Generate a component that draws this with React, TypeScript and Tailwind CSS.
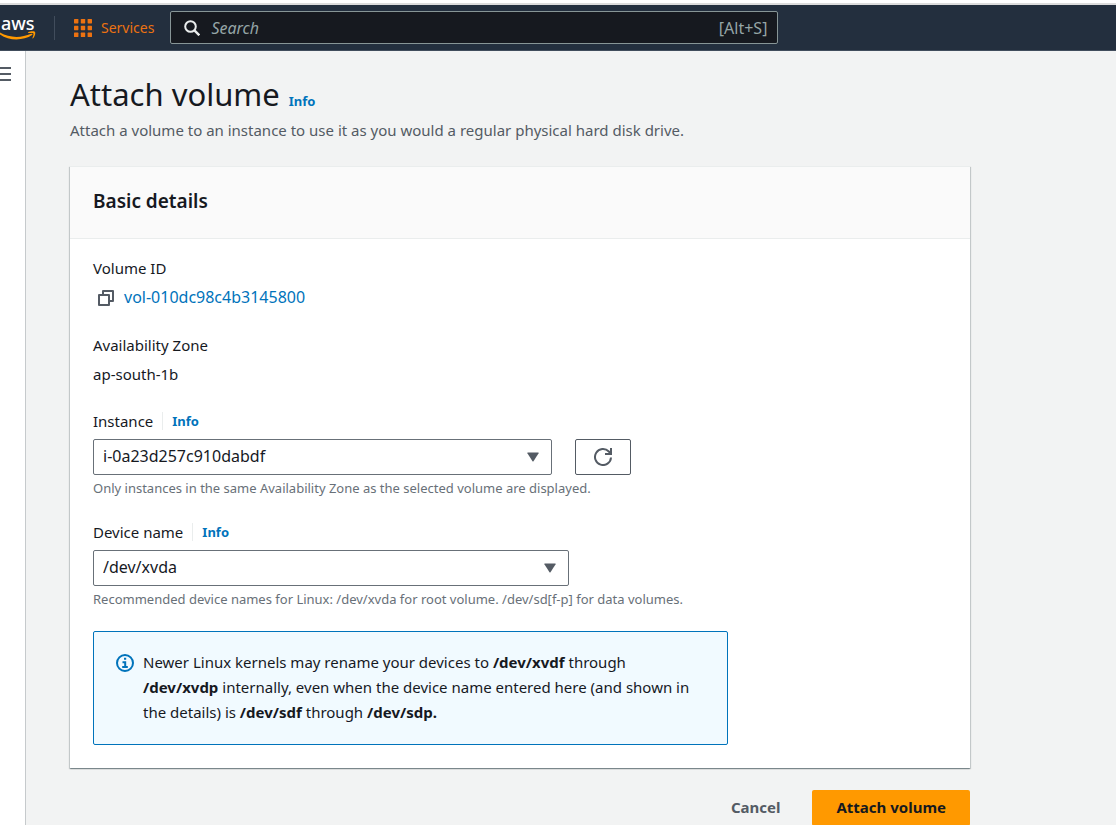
import React from 'react';

type IDetail = {
  title: string;
  children: React.ReactNode;
};

type ISelectField = {
  id: string;
  label: string;
  options: string[];
  hint: string;
  width: string;
  children?: React.ReactNode;
};

function AwsLogo() {
  return (
    <a
      href="#home"
      aria-label="AWS home"
      className="flex w-9 flex-col items-start"
    >
      <span className="pl-px text-lg leading-4 font-medium text-white">
        aws
      </span>
      <svg viewBox="0 0 36 9" className="h-[9px] w-9" fill="#f90">
        <path d="M0 1.6C9.5 7 21 7.2 31.2 2.8c1-.4 1.8.6.9 1.3C23 10 9 10 0 3.4z" />
        <path d="M28.2 1.3C30 .1 33.8-.1 34.8.7c1 .9.3 4.7-1.7 6.5-.5.4-.9.1-.6-.4.7-1.5 1.3-3.8.9-4.4-.5-.6-3-.6-4.7-.4-.6.1-.9-.3-.5-.7z" />
      </svg>
    </a>
  );
}

function ServicesIcon() {
  return (
    <svg viewBox="0 0 18 18" className="h-[18px] w-[18px]" fill="#ec7211">
      {[0, 6.8, 13.6].map((y) =>
        [0, 6.8, 13.6].map((x) => (
          <rect
            key={`${x}-${y}`}
            x={x}
            y={y}
            width="4.4"
            height="4.4"
            rx="0.6"
          />
        ))
      )}
    </svg>
  );
}

function TopBar() {
  return (
    <header className="flex h-[46px] items-center border-b border-[#414d5c] bg-[#232f3e]">
      <AwsLogo />
      <div className="ml-[18px] h-6 w-px bg-[#414d5c]" />
      <button
        type="button"
        className="ml-[19px] flex items-center gap-[9px] text-sm text-[#ec7211]"
      >
        <ServicesIcon />
        Services
      </button>
      <label className="ml-4 flex h-[33px] w-[608px] items-center rounded-xs border border-[#879596] bg-[#16191f] px-[10px]">
        <svg
          viewBox="0 0 16 16"
          className="mx-[3px] h-4 w-4 shrink-0"
          fill="none"
          stroke="#eaeded"
          strokeWidth="2"
        >
          <circle cx="6.5" cy="6.5" r="5.3" />
          <path d="M10.4 10.4l4.9 4.9" strokeWidth="2.4" />
        </svg>
        <input
          type="text"
          aria-label="Search"
          placeholder="Search"
          className="ml-2 min-w-0 flex-1 bg-transparent text-base text-white italic outline-none placeholder:text-[#95a5a6]"
        />
        <span className="text-base text-[#95a5a6]">[Alt+S]</span>
      </label>
    </header>
  );
}

function InfoLink() {
  return (
    <a href="#info" className="text-[13px] font-bold text-[#0073bb]">
      Info
    </a>
  );
}

function Detail({ title, children }: IDetail) {
  return (
    <div className="flex flex-col gap-[5px] leading-6">
      <div>{title}</div>
      <div>{children}</div>
    </div>
  );
}

function SelectField({
  id,
  label,
  options,
  hint,
  width,
  children,
}: ISelectField) {
  return (
    <div>
      <div className="flex items-center leading-6">
        <label htmlFor={id}>{label}</label>
        <div className="mx-[9px] h-[18px] w-px bg-[#eaeded]" />
        <InfoLink />
      </div>
      <div className="mt-[6px] flex gap-[23px]">
        <div className={`relative ${width}`}>
          <select
            id={id}
            className="h-9 w-full appearance-none rounded-xs border border-[#687078] bg-white px-[9px] pb-[2px] text-base"
          >
            {options.map((option) => (
              <option key={option}>{option}</option>
            ))}
          </select>
          <svg
            viewBox="0 0 12 10"
            className="pointer-events-none absolute top-[13px] right-[13px] h-[10px] w-3"
            fill="#545b64"
          >
            <path d="M.8.5h10.4q.8 0 .4.7L6.5 9.300q-.5.6-1 0L.4 1.2Q0 .5.8.5z" />
          </svg>
        </div>
        {children}
      </div>
      <p className="mt-1 text-[13px] leading-[18px] text-[#687078]">{hint}</p>
    </div>
  );
}

export default function App() {
  return (
    <div className="flex min-h-screen flex-col bg-white font-['Noto_Sans',sans-serif] text-[15px] text-[#16191f]">
      <div className="mt-[3px] h-[2px] bg-[#dcdcdc]" />
      <TopBar />
      <div className="flex flex-1">
        <aside className="w-[26px] shrink-0 border-r border-[#c6cacc] bg-white pt-4">
          <button type="button" aria-label="Open navigation" className="block">
            <svg
              viewBox="0 0 11 14"
              className="h-[14px] w-[11px]"
              stroke="#545b64"
              strokeWidth="2"
            >
              <path d="M0 1h11M0 7h11M0 13h11" />
            </svg>
          </button>
        </aside>
        <main className="min-w-0 flex-1 bg-[#f2f3f3] pl-11">
          <div className="max-w-[900px]">
            <div className="flex items-baseline gap-[9px] pt-[23px]">
              <h1 className="text-[31px] leading-10">Attach volume</h1>
              <InfoLink />
            </div>
            <p className="mt-1 leading-6 text-[#545b64]">
              Attach a volume to an instance to use it as you would a regular
              physical hard disk drive.
            </p>
            <section className="mt-6 border-t border-[#eaeded] bg-white shadow-[0_1px_1px_0_#001c244d,1px_1px_1px_0_#001c2426,-1px_1px_1px_0_#001c2426]">
              <div className="border-b border-[#eaeded] bg-[#fafafa] px-[23px] pt-[19px] pb-[22px]">
                <h2 className="text-[19px] leading-[30px] font-semibold">
                  Basic details
                </h2>
              </div>
              <div className="flex flex-col gap-[23px] px-[23px] pt-[17px] pb-[23px]">
                <div className="flex flex-col gap-6">
                  <Detail title="Volume ID">
                    <div className="flex items-center gap-[10px] pl-[5px]">
                      <button type="button" aria-label="Copy volume ID">
                        <svg
                          viewBox="0 0 16 16"
                          className="mt-[2px] h-4 w-4"
                          fill="none"
                          stroke="#545b64"
                          strokeWidth="2"
                          strokeLinejoin="round"
                        >
                          <path d="M1 5h10v10H1z" />
                          <path d="M5 5V1h10v10h-4" />
                        </svg>
                      </button>
                      <a href="#volume" className="text-base text-[#0073bb]">
                        vol-010dc98c4b3145800
                      </a>
                    </div>
                  </Detail>
                  <Detail title="Availability Zone">ap-south-1b</Detail>
                </div>
                <SelectField
                  id="instance"
                  label="Instance"
                  options={['i-0a23d257c910dabdf']}
                  hint="Only instances in the same Availability Zone as the selected volume are displayed."
                  width="w-[459px]"
                >
                  <button
                    type="button"
                    aria-label="Refresh instances"
                    className="flex h-9 w-14 items-center justify-center rounded-xs border border-[#545b64] bg-white"
                  >
                    <svg
                      viewBox="0 0 18 18"
                      className="h-[18px] w-[18px]"
                      fill="none"
                      stroke="#545b64"
                      strokeWidth="2"
                    >
                      <path d="M17 9.5A8 8 0 1 1 14.8 3.5l2 2.2" />
                      <path d="M17 0v6h-6" />
                    </svg>
                  </button>
                </SelectField>
                <SelectField
                  id="device"
                  label="Device name"
                  options={['/dev/xvda']}
                  hint="Recommended device names for Linux: /dev/xvda for root volume. /dev/sd[f-p] for data volumes."
                  width="w-[476px]"
                />
                <div className="flex max-w-[635px] gap-[9px] rounded-xs border border-[#0073bb] bg-[#f1faff] pt-[18px] pr-5 pb-[19px] pl-[22px]">
                  <svg
                    viewBox="0 0 18 18"
                    className="mt-1 h-[18px] w-[18px] shrink-0"
                    fill="none"
                    stroke="#0073bb"
                    strokeWidth="2"
                  >
                    <circle cx="9" cy="9" r="8" />
                    <path d="M8 4.8h2.2M6.5 8.3H9.2V13M6.2 13h5.6" />
                  </svg>
                  <p className="leading-[25px]">
                    Newer Linux kernels may rename your devices to{' '}
                    <b>/dev/xvdf</b> through
                    <br />
                    <b>/dev/xvdp</b> internally, even when the device name
                    entered here (and shown in
                    <br />
                    the details) is <b>/dev/sdf</b> through <b>/dev/sdp.</b>
                  </p>
                </div>
              </div>
            </section>
            <div className="mt-[22px] flex justify-end gap-2">
              <button
                type="button"
                className="h-9 px-6 pb-[2px] font-bold text-[#545b64]"
              >
                Cancel
              </button>
              <button
                type="button"
                className="h-9 rounded-xs bg-[#ff9900] px-6 pb-[2px] font-bold"
              >
                Attach volume
              </button>
            </div>
          </div>
        </main>
      </div>
    </div>
  );
}
